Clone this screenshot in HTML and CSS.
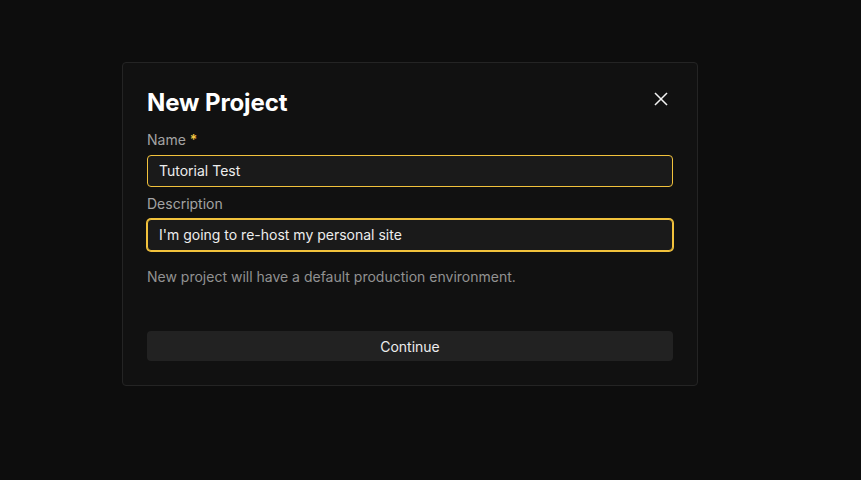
FILE: index.html
```html
<!DOCTYPE html>
<html>
<head>
<meta charset="utf-8">
<link rel="stylesheet" href="styles.css">
</head>
<body>
<div class="page">
  <div class="modal">
    <div class="header">
      <h1 class="title">New Project</h1>
      <button class="close" aria-label="Close">
        <svg width="14" height="14" viewBox="0 0 14 14"><path d="M1.5 1.5L12.5 12.5M12.5 1.5L1.5 12.5" stroke="#f2f2f2" stroke-width="1.5" stroke-linecap="square"/></svg>
      </button>
    </div>
    <label class="label">Name <span class="req">*</span></label>
    <div class="input">Tutorial Test</div>
    <label class="label label2">Description</label>
    <div class="input focused">I'm going to re-host my personal site</div>
    <p class="help">New project will have a default production environment.</p>
    <button class="continue">Continue</button>
  </div>
</div>
</body>
</html>
```

FILE: styles.css
```css
* { box-sizing: border-box; }
html, body { margin: 0; padding: 0; }
body {
  background: #0d0d0d;
  font-family: Inter, "Noto Sans", sans-serif;
  width: 861px;
  height: 480px;
  overflow: hidden;
}
.page {
  padding-top: 62px;
  padding-left: 122px;
}
.modal {
  width: 576px;
  background: #111111;
  border: 1px solid #242424;
  border-radius: 4px;
  padding: 25px 24px 24px 24px;
  display: flex;
  flex-direction: column;
}
.header {
  display: flex;
  justify-content: space-between;
  align-items: flex-start;
  margin-bottom: 12px;
}
.title {
  margin: 0;
  font-size: 24px;
  line-height: 30px;
  font-weight: 700;
  color: #ffffff;
  letter-spacing: -0.1px;
}
.close {
  background: none;
  border: none;
  padding: 0;
  margin-top: 4px;
  margin-right: 5px;
  width: 14px;
  height: 14px;
  display: flex;
}
.label {
  font-size: 14px;
  line-height: 20px;
  color: #a3a3a3;
  margin-bottom: 5px;
}
.label2 { margin-top: 7px; }
.req { color: #f4c542; font-weight: 600; }
.input {
  height: 32px;
  border: 1px solid #f2c23c;
  border-radius: 4px;
  background: #1a1a1a;
  color: #ededed;
  font-size: 14px;
  line-height: 30px;
  padding: 0 11px;
}
.input.focused {
  box-shadow: 0 0 0 1px #f2c23c;
}
.help {
  margin: 16px 0 0 0;
  font-size: 14px;
  line-height: 20px;
  color: #929292;
}
.continue {
  margin-top: 44px;
  height: 30px;
  background: #222222;
  border: none;
  border-radius: 4px;
  color: #ededed;
  font-family: Inter, "Noto Sans", sans-serif;
  font-size: 14px;
}
```
